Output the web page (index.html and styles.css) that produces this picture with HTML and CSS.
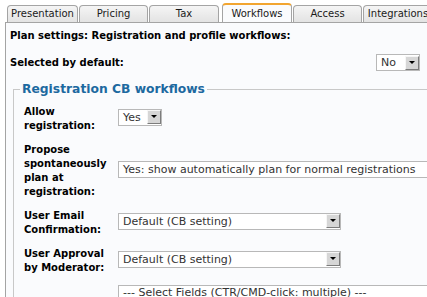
FILE: index.html
```html
<!DOCTYPE html>
<html lang="en">
<head>
<meta charset="UTF-8">
<title>Plan settings</title>
<link rel="stylesheet" href="styles.css">
</head>
<body>

<nav class="tabs">
  <div class="tab t-pres">Presentation</div>
  <div class="tab t-price">Pricing</div>
  <div class="tab t-tax">Tax</div>
  <div class="tab t-work active">Workflows</div>
  <div class="tab t-access">Access</div>
  <div class="tab t-integ">Integrations</div>
</nav>

<main class="panel">
  <h4 class="title">Plan settings: Registration and profile workflows:</h4>

  <div class="default-row">
    <span class="lbl">Selected by default:</span>
    <div class="sel sel-no"><span>No</span><i class="arrow"></i></div>
  </div>

  <fieldset class="workflows">
    <legend>Registration CB workflows</legend>

    <div class="row">
      <div class="lbl">Allow<br>registration:</div>
      <div class="sel sel-yes"><span>Yes</span><i class="arrow"></i></div>
    </div>

    <div class="row">
      <div class="lbl">Propose spontaneously plan at registration:</div>
      <div class="sel sel-wide"><span>Yes: show automatically plan for normal registrations</span></div>
    </div>

    <div class="row">
      <div class="lbl">User Email Confirmation:</div>
      <div class="sel sel-mid"><span>Default (CB setting)</span><i class="arrow"></i></div>
    </div>

    <div class="row">
      <div class="lbl">User Approval by Moderator:</div>
      <div class="sel sel-mid"><span>Default (CB setting)</span><i class="arrow"></i></div>
    </div>

    <div class="row multi">
      <div class="lbl"></div>
      <div class="sel sel-multi"><span>--- Select Fields (CTR/CMD-click: multiple) ---</span></div>
    </div>
  </fieldset>
</main>

</body>
</html>
```

FILE: styles.css
```css
html, body {
  margin: 0;
  padding: 0;
  background: #ffffff;
  font-family: "DejaVu Sans", sans-serif;
  color: #000;
  overflow: hidden;
}

/* tab bar */

.tabs {
  display: flex;
  align-items: flex-end;
  padding: 3px 0 0 7px;
  height: 19px;
  overflow: hidden;
}

.tab {
  height: 17px;
  flex: none;
  box-sizing: border-box;
  margin-right: 1px;
  border: 1px solid #a4a4a4;
  border-bottom: none;
  border-radius: 4px 4px 0 0;
  background: linear-gradient(#f5f5f5, #e3e3e3);
  font-size: 10px;
  line-height: 16px;
  text-align: center;
  white-space: nowrap;
  color: #1a1a1a;
}

.t-pres { width: 71px; }
.t-price { width: 69px; }
.t-tax { width: 70px; }
.t-work { width: 70px; margin-left: 2px; }
.t-access { width: 69px; }
.t-integ { width: 70px; }

.tab.active {
  height: 20px;
  border-top: 2px solid #f2a530;
  background: #fafbfd;
  line-height: 17px;
  margin-bottom: -1px;
  position: relative;
}

/* main panel */

.panel {
  margin-left: 5px;
  border-top: 1px solid #a4a4a4;
  border-left: 1px solid #a4a4a4;
  background: #fafbfd;
  padding: 6px 7px 0 4px;
  height: 300px;
}

.title {
  margin: 0;
  font-size: 10px;
  font-weight: bold;
  line-height: 14px;
}

.lbl {
  font-size: 10px;
  font-weight: bold;
  line-height: 14px;
}

.default-row {
  display: flex;
  justify-content: space-between;
  align-items: center;
  margin-top: 11px;
}

/* fake selects */

.sel {
  display: flex;
  align-items: center;
  justify-content: space-between;
  height: 15px;
  border: 1px solid #b8b8b8;
  background: #fff;
  font-size: 11px;
  color: #333;
  padding-left: 4px;
  white-space: nowrap;
  overflow: hidden;
}

.arrow {
  flex: none;
  width: 14px;
  height: 14px;
  background: #d6d6d6;
  border-top: 1px solid #f6f6f6;
  border-left: 1px solid #f6f6f6;
  border-right: 1px solid #7c7c7c;
  border-bottom: 1px solid #7c7c7c;
  box-sizing: border-box;
  position: relative;
}

.arrow::after {
  content: "";
  position: absolute;
  left: 3px;
  top: 4px;
  border-left: 3px solid transparent;
  border-right: 3px solid transparent;
  border-top: 3px solid #000;
}

.sel-no { width: 38px; }
.sel-yes { width: 38px; }
.sel-mid { width: 217px; }
.sel-wide { width: 320px; }
.sel-multi { width: 320px; align-items: flex-start; height: 40px; }

/* fieldset */

.workflows {
  margin: 11px 0 0 3px;
  width: 440px;
  border: 1px solid #c8c8c8;
  border-right: none;
  padding: 4px 0 0 10px;
}

.workflows legend {
  color: #1d69a0;
  font-size: 12.3px;
  font-weight: bold;
  padding: 0 2px;
  margin-left: -4px;
}

.row {
  display: grid;
  grid-template-columns: 94px auto;
  align-items: center;
  justify-items: start;
  padding: 5px 0;
}

.row .sel {
  margin-bottom: 4px;
}

.row.multi {
  align-items: start;
}
```
